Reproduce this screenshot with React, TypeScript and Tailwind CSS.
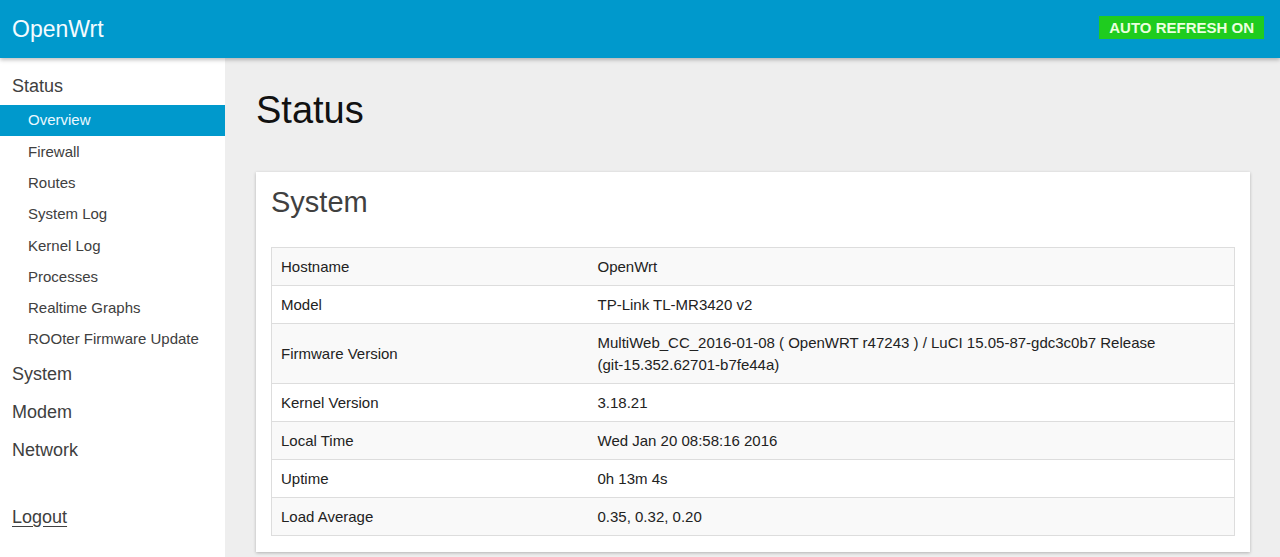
import React from "react";

const subItems = [
  "Overview",
  "Firewall",
  "Routes",
  "System Log",
  "Kernel Log",
  "Processes",
  "Realtime Graphs",
  "ROOter Firmware Update",
];

const rows: [string, React.ReactNode][] = [
  ["Hostname", "OpenWrt"],
  ["Model", "TP-Link TL-MR3420 v2"],
  [
    "Firmware Version",
    <>
      MultiWeb_CC_2016-01-08 ( OpenWRT r47243 ) / LuCI 15.05-87-gdc3c0b7 Release
      <br />
      (git-15.352.62701-b7fe44a)
    </>,
  ],
  ["Kernel Version", "3.18.21"],
  ["Local Time", "Wed Jan 20 08:58:16 2016"],
  ["Uptime", "0h 13m 4s"],
  ["Load Average", "0.35, 0.32, 0.20"],
];

export default function App() {
  return (
    <div
      className="w-[1280px] h-[557px] overflow-hidden flex flex-col bg-[#eeeeee]"
      style={{ fontFamily: '"Liberation Sans", Arial, sans-serif' }}
    >
      <header className="relative z-10 h-[58px] shrink-0 bg-[#0099cc] flex items-center justify-between pl-[12px] pr-[16px] shadow-[0_2px_4px_rgba(0,0,0,0.25)]">
        <span className="text-[23px] text-[#f4fbff] leading-none">OpenWrt</span>
        <span className="self-start mt-[16px] bg-[#1fcc1f] text-[#eaffdf] font-bold text-[15px] leading-[23px] px-[10px] h-[23px]">
          AUTO REFRESH ON
        </span>
      </header>
      <div className="flex flex-1 min-h-0">
        <aside className="w-[225px] shrink-0 bg-white pt-[9px] text-[#404040]">
          <div className="h-[38px] flex items-center pl-[12px] text-[18px]">Status</div>
          <ul>
            {subItems.map((s, i) => (
              <li
                key={s}
                className={
                  "h-[31.3px] flex items-center pl-[28px] text-[15px] " +
                  (i === 0 ? "bg-[#0099cc] text-[#eaf8ff]" : "")
                }
              >
                {s}
              </li>
            ))}
          </ul>
          <div className="h-[38px] flex items-center pl-[12px] text-[18px]">System</div>
          <div className="h-[38px] flex items-center pl-[12px] text-[18px]">Modem</div>
          <div className="h-[38px] flex items-center pl-[12px] text-[18px]">Network</div>
          <div className="mt-[29px] h-[38px] flex items-center pl-[12px] text-[18px]">
            <span className="underline underline-offset-[3px]">Logout</span>
          </div>
        </aside>
        <main className="flex-1 pl-[31px] pr-[30px] pt-[30px]">
          <h1 className="text-[38px] leading-[44px] text-[#111]">Status</h1>
          <section className="mt-[40px] bg-white px-[15px] pt-[15px] pb-[16px] shadow-[0_1px_3px_rgba(0,0,0,0.25)]">
            <h2 className="text-[29px] leading-[30px] text-[#404040]">System</h2>
            <table className="mt-[30px] w-full border border-[#dddddd] border-collapse text-[15px] text-[#222]">
              <tbody>
                {rows.map(([k, v], i) => (
                  <tr key={k} className={i % 2 === 0 ? "bg-[#f9f9f9]" : "bg-white"}>
                    <td className="w-[317px] border-t border-[#dddddd] pl-[9px] py-[7.5px] leading-[22px] align-middle">
                      {k}
                    </td>
                    <td className="border-t border-[#dddddd] pl-[9px] py-[7.5px] leading-[22px] align-middle">
                      {v}
                    </td>
                  </tr>
                ))}
              </tbody>
            </table>
          </section>
        </main>
      </div>
    </div>
  );
}
